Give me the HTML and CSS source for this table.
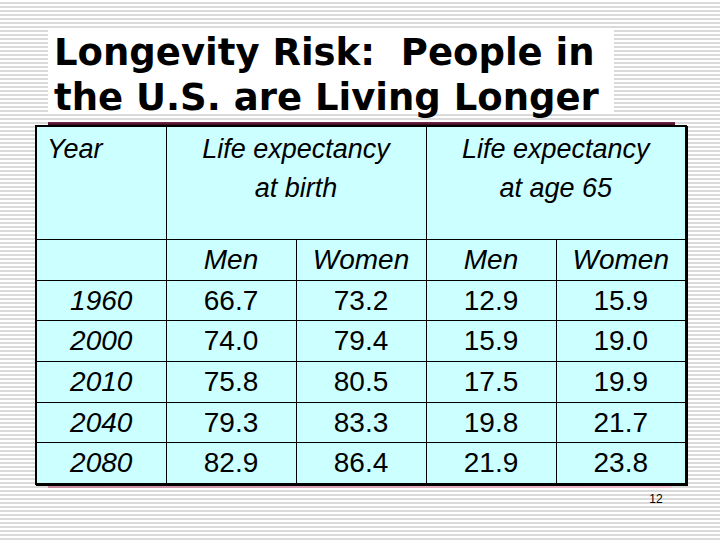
FILE: index.html
```html
<!DOCTYPE html>
<html>
<head>
<meta charset="utf-8">
<link rel="stylesheet" href="styles.css">
</head>
<body>
<div class="slide">
  <div class="title-box">
    <h1 class="title">Longevity Risk:&nbsp; People in<br>the U.S. are Living Longer</h1>
  </div>
  <div class="rule-top"></div>
  <table class="data">
    <colgroup>
      <col class="c"><col class="c"><col class="c"><col class="c"><col class="c">
    </colgroup>
    <tr class="head">
      <td class="hd left">Year</td>
      <td class="hd" colspan="2">Life expectancy<br>at birth</td>
      <td class="hd" colspan="2">Life expectancy<br>at age 65</td>
    </tr>
    <tr class="row">
      <td></td>
      <td class="it">Men</td><td class="it">Women</td><td class="it">Men</td><td class="it">Women</td>
    </tr>
    <tr class="row">
      <td class="it">1960</td><td>66.7</td><td>73.2</td><td>12.9</td><td>15.9</td>
    </tr>
    <tr class="row">
      <td class="it">2000</td><td>74.0</td><td>79.4</td><td>15.9</td><td>19.0</td>
    </tr>
    <tr class="row">
      <td class="it">2010</td><td>75.8</td><td>80.5</td><td>17.5</td><td>19.9</td>
    </tr>
    <tr class="row">
      <td class="it">2040</td><td>79.3</td><td>83.3</td><td>19.8</td><td>21.7</td>
    </tr>
    <tr class="row">
      <td class="it">2080</td><td>82.9</td><td>86.4</td><td>21.9</td><td>23.8</td>
    </tr>
  </table>
  <div class="rule-bottom"></div>
  <div class="page-num">12</div>
</div>
</body>
</html>
```

FILE: styles.css
```css
html, body {
  margin: 0;
  padding: 0;
}
body {
  width: 720px;
  height: 540px;
  overflow: hidden;
  background: repeating-linear-gradient(to bottom, #ffffff 0px, #ffffff 2.5px, #dadada 2.5px, #dadada 4px);
}
.slide {
  width: 720px;
  height: 540px;
  display: flex;
  flex-direction: column;
}
.title-box {
  margin: 30px 0 0 48px;
  width: 566px;
  height: 82px;
  background: #ffffff;
  padding-left: 6px;
  box-sizing: border-box;
}
.title {
  margin: 0;
  font-family: "DejaVu Sans", Verdana, sans-serif;
  font-weight: bold;
  font-size: 37px;
  line-height: 45px;
  color: #000;
  white-space: nowrap;
}
.rule-top {
  margin: 10px 0 0 48px;
  width: 627px;
  height: 3px;
  background: linear-gradient(to bottom, #7a2a4a, #3a0a20);
}
.data {
  margin-left: 35px;
  width: 648px;
  border-collapse: collapse;
  table-layout: fixed;
  background: #ccffff;
  border: 2px solid #000;
  box-shadow: 1px 1px 0 #000;
  font-family: "Liberation Sans", Arial, sans-serif;
  font-size: 28px;
  color: #000;
}
.data col.c {
  width: 130px;
}
.data td {
  border: 1px solid #000;
  padding: 0;
  text-align: center;
  vertical-align: middle;
  line-height: 30px;
}
.head td {
  height: 109px;
  vertical-align: top;
  padding-top: 3px;
  line-height: 39px;
}
.hd {
  font-style: italic;
  font-size: 27px;
}
.hd.left {
  text-align: left;
  padding-left: 10px;
}
.row td {
  height: 39.7px;
}
.it {
  font-style: italic;
}
.rule-bottom {
  margin: 1px 0 0 48px;
  width: 624px;
  height: 2px;
  background: linear-gradient(to right, #c48aa0, #f2bfd0);
}
.page-num {
  margin: 4px 0 0 640px;
  width: 32px;
  text-align: center;
  font-family: "Liberation Sans", Arial, sans-serif;
  font-size: 12px;
  line-height: 14px;
  color: #000;
}
```
